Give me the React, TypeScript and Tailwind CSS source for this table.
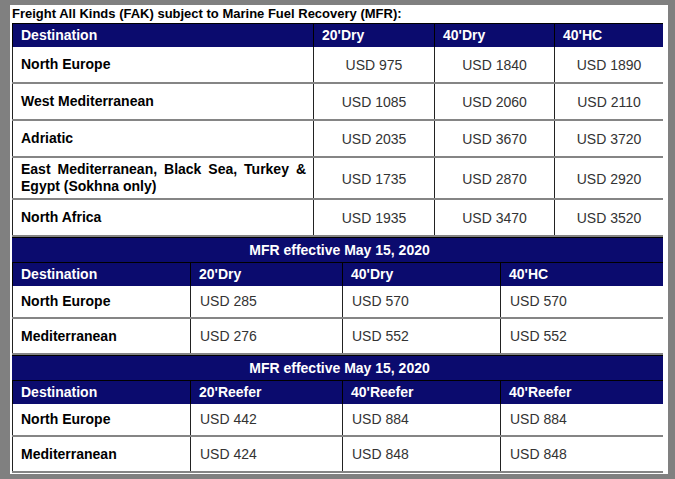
const navy = 'bg-[#0b0b6e]'

type Row = { dest: string; vals: string[]; h: string }

const fakRows: Row[] = [
  { dest: 'North Europe', vals: ['USD 975', 'USD 1840', 'USD 1890'], h: 'h-[37px]' },
  { dest: 'West Mediterranean', vals: ['USD 1085', 'USD 2060', 'USD 2110'], h: 'h-[37px]' },
  { dest: 'Adriatic', vals: ['USD 2035', 'USD 3670', 'USD 3720'], h: 'h-[37px]' },
  { dest: 'EAST', vals: ['USD 1735', 'USD 2870', 'USD 2920'], h: 'h-[42px]' },
  { dest: 'North Africa', vals: ['USD 1935', 'USD 3470', 'USD 3520'], h: 'h-[37px]' },
]

const fakWidths = ['w-[301px]', 'w-[121px]', 'w-[120px]', 'w-[109px]']
const mfrWidths = ['w-[178px]', 'w-[152px]', 'w-[158px]', 'w-[163px]']

function HeaderRow({ cols, widths, h }: { cols: string[]; widths: string[]; h: string }) {
  return (
    <div className={`flex ${h} ${navy} border-t border-black`}>
      {cols.map((c, i) => (
        <div
          key={i}
          className={`${widths[i]} shrink-0 border-l border-black flex items-center pl-[8px] text-[14px] font-bold text-white`}
        >
          {c}
        </div>
      ))}
    </div>
  )
}

function MfrTable({ heads, rows }: { heads: string[]; rows: { dest: string; vals: string[] }[] }) {
  return (
    <div>
      <div className={`h-[25px] ${navy} border-t border-black flex items-center justify-center text-[14px] font-bold text-white pl-[4px]`}>
        MFR effective May 15, 2020
      </div>
      <HeaderRow cols={['Destination', ...heads]} widths={mfrWidths} h="h-[24px]" />
      {rows.map((r, ri) => (
        <div
          key={r.dest}
          className={`flex ${ri === 0 ? 'h-[33px]' : 'h-[36px]'} border-b-2 border-[#858585] ${ri === rows.length - 1 ? 'border-b-0' : ''}`}
        >
          <div className={`${mfrWidths[0]} shrink-0 border-l border-[#222] flex items-center pl-[8px] text-[14px] font-bold text-black`}>
            {r.dest}
          </div>
          {r.vals.map((v, i) => (
            <div
              key={i}
              className={`${mfrWidths[i + 1]} shrink-0 border-l border-[#222] flex items-center pl-[9px] text-[14px] text-[#333]`}
            >
              {v}
            </div>
          ))}
        </div>
      ))}
    </div>
  )
}

export default function App() {
  return (
    <div className="w-[675px] h-[479px] bg-[#808080] pl-[10px] pr-[7px] pt-[5px] pb-[5px] font-['Liberation_Sans',Arial,sans-serif]">
      <div className="h-full bg-white pl-[2px] pr-[5px] overflow-hidden">
        <p className="h-[18px] leading-[17px] text-[13px] font-bold text-black">
          Freight All Kinds (FAK) subject to Marine Fuel Recovery (MFR):
        </p>

        <div>
          <HeaderRow cols={['Destination', "20'Dry", "40'Dry", "40'HC"]} widths={fakWidths} h="h-[24px]" />
          {fakRows.map((r) => (
            <div key={r.dest} className={`flex ${r.h} border-b-2 border-[#858585]`}>
              <div className={`${fakWidths[0]} shrink-0 border-l border-[#222] flex items-center pl-[8px] pr-[7px] text-[14px] font-bold text-black`}>
                {r.dest === 'EAST' ? (
                  <div className="w-full leading-[17px]">
                    <span className="block text-justify [text-align-last:justify]">East Mediterranean, Black Sea, Turkey &amp;</span>
                    <span className="block">Egypt (Sokhna only)</span>
                  </div>
                ) : (
                  r.dest
                )}
              </div>
              {r.vals.map((v, i) => (
                <div
                  key={i}
                  className={`${fakWidths[i + 1]} shrink-0 border-l border-[#222] flex items-center justify-center pt-[2px] text-[14px] text-[#333]`}
                >
                  {v}
                </div>
              ))}
            </div>
          ))}
        </div>

        <MfrTable
          heads={["20'Dry", "40'Dry", "40'HC"]}
          rows={[
            { dest: 'North Europe', vals: ['USD 285', 'USD 570', 'USD 570'] },
            { dest: 'Mediterranean', vals: ['USD 276', 'USD 552', 'USD 552'] },
          ]}
        />

        <MfrTable
          heads={["20'Reefer", "40'Reefer", "40'Reefer"]}
          rows={[
            { dest: 'North Europe', vals: ['USD 442', 'USD 884', 'USD 884'] },
            { dest: 'Mediterranean', vals: ['USD 424', 'USD 848', 'USD 848'] },
          ]}
        />
      </div>
    </div>
  )
}
